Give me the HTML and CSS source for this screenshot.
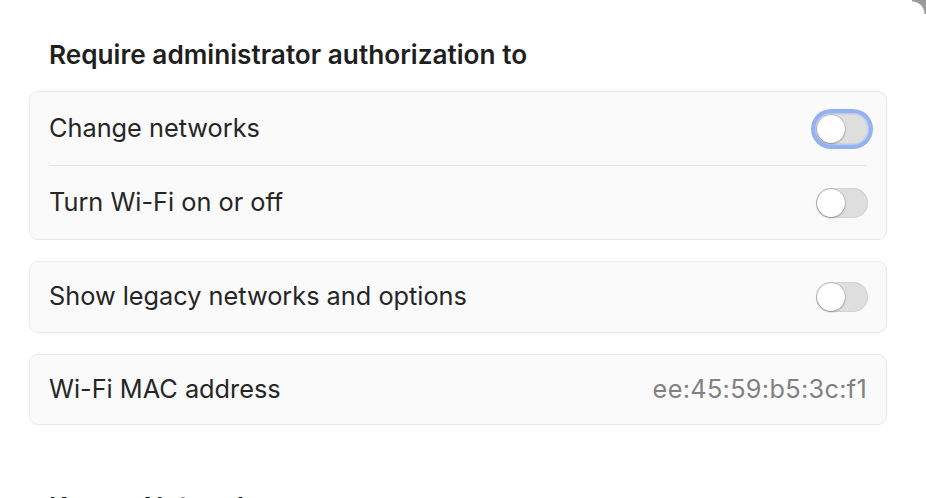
FILE: index.html
```html
<!DOCTYPE html>
<html>
<head>
<meta charset="utf-8">
<link rel="stylesheet" href="styles.css">
</head>
<body>
<div class="corner"></div>
<main class="pane">
  <h2 class="section-title">Require administrator authorization to</h2>
  <section class="card">
    <div class="row">
      <span class="label">Change networks</span>
      <span class="toggle focused"><span class="knob"></span></span>
    </div>
    <div class="divider"></div>
    <div class="row">
      <span class="label">Turn Wi-Fi on or off</span>
      <span class="toggle"><span class="knob"></span></span>
    </div>
  </section>
  <section class="card single">
    <div class="row">
      <span class="label">Show legacy networks and options</span>
      <span class="toggle"><span class="knob"></span></span>
    </div>
  </section>
  <section class="card single">
    <div class="row">
      <span class="label">Wi-Fi MAC address</span>
      <span class="value">ee:45:59:b5:3c:f1</span>
    </div>
  </section>
  <h2 class="section-title known">Known Networks</h2>
</main>
</body>
</html>
```
FILE: styles.css
```css
html, body {
  margin: 0;
  padding: 0;
  background: #ffffff;
  overflow: hidden;
}
body {
  width: 926px;
  height: 498px;
  position: relative;
  font-family: Inter, "Noto Sans", sans-serif;
  color: #262626;
}
.corner {
  position: absolute;
  top: 0;
  right: 0;
  width: 14px;
  height: 14px;
  background: radial-gradient(circle at 0 100%, transparent 12px, #9a9a9a 13px);
}
.pane {
  width: 858px;
  padding-left: 29px;
  padding-top: 41px;
  display: flex;
  flex-direction: column;
}
.section-title {
  margin: 0 0 22px 20px;
  font-size: 26.2px;
  font-weight: 600;
  line-height: 28px;
  color: #1f1f1f;
  letter-spacing: 0;
}
.card {
  background: #fafafa;
  border: 1px solid #e9e9e9;
  border-radius: 9px;
  display: flex;
  flex-direction: column;
  margin-bottom: 21px;
}
.row {
  height: 73px;
  display: flex;
  align-items: center;
  justify-content: space-between;
  padding: 0 19px 0 19px;
}
.card.single .row {
  height: 70px;
}
.card.single:last-of-type .row {
  height: 69px;
}
.label {
  font-size: 25.3px;
  padding-bottom: 3px;
}
.value {
  font-size: 25.3px;
  letter-spacing: 0.3px;
  color: #818181;
  padding-bottom: 3px;
}
.divider {
  height: 1px;
  background: #e6e6e6;
  margin: 0 19px;
}
.toggle {
  position: relative;
  width: 52px;
  height: 30px;
  margin-right: -1px;
  border-radius: 15px;
  background: #dedede;
  box-shadow: inset 0 0 0 1px #d2d2d2;
}
.toggle.focused {
  box-shadow: inset 0 0 0 1px #d2d2d2, 0 0 0 1px #b9cbf2, 0 0 0 5px #94b2f3;
}
.knob {
  position: absolute;
  left: 1px;
  top: 1px;
  width: 28px;
  height: 28px;
  border-radius: 50%;
  background: #ffffff;
  box-shadow: 0 0 0 0.5px rgba(0,0,0,0.25), 0 1px 2px rgba(0,0,0,0.25);
}
.known {
  margin-top: 47px;
}
```
